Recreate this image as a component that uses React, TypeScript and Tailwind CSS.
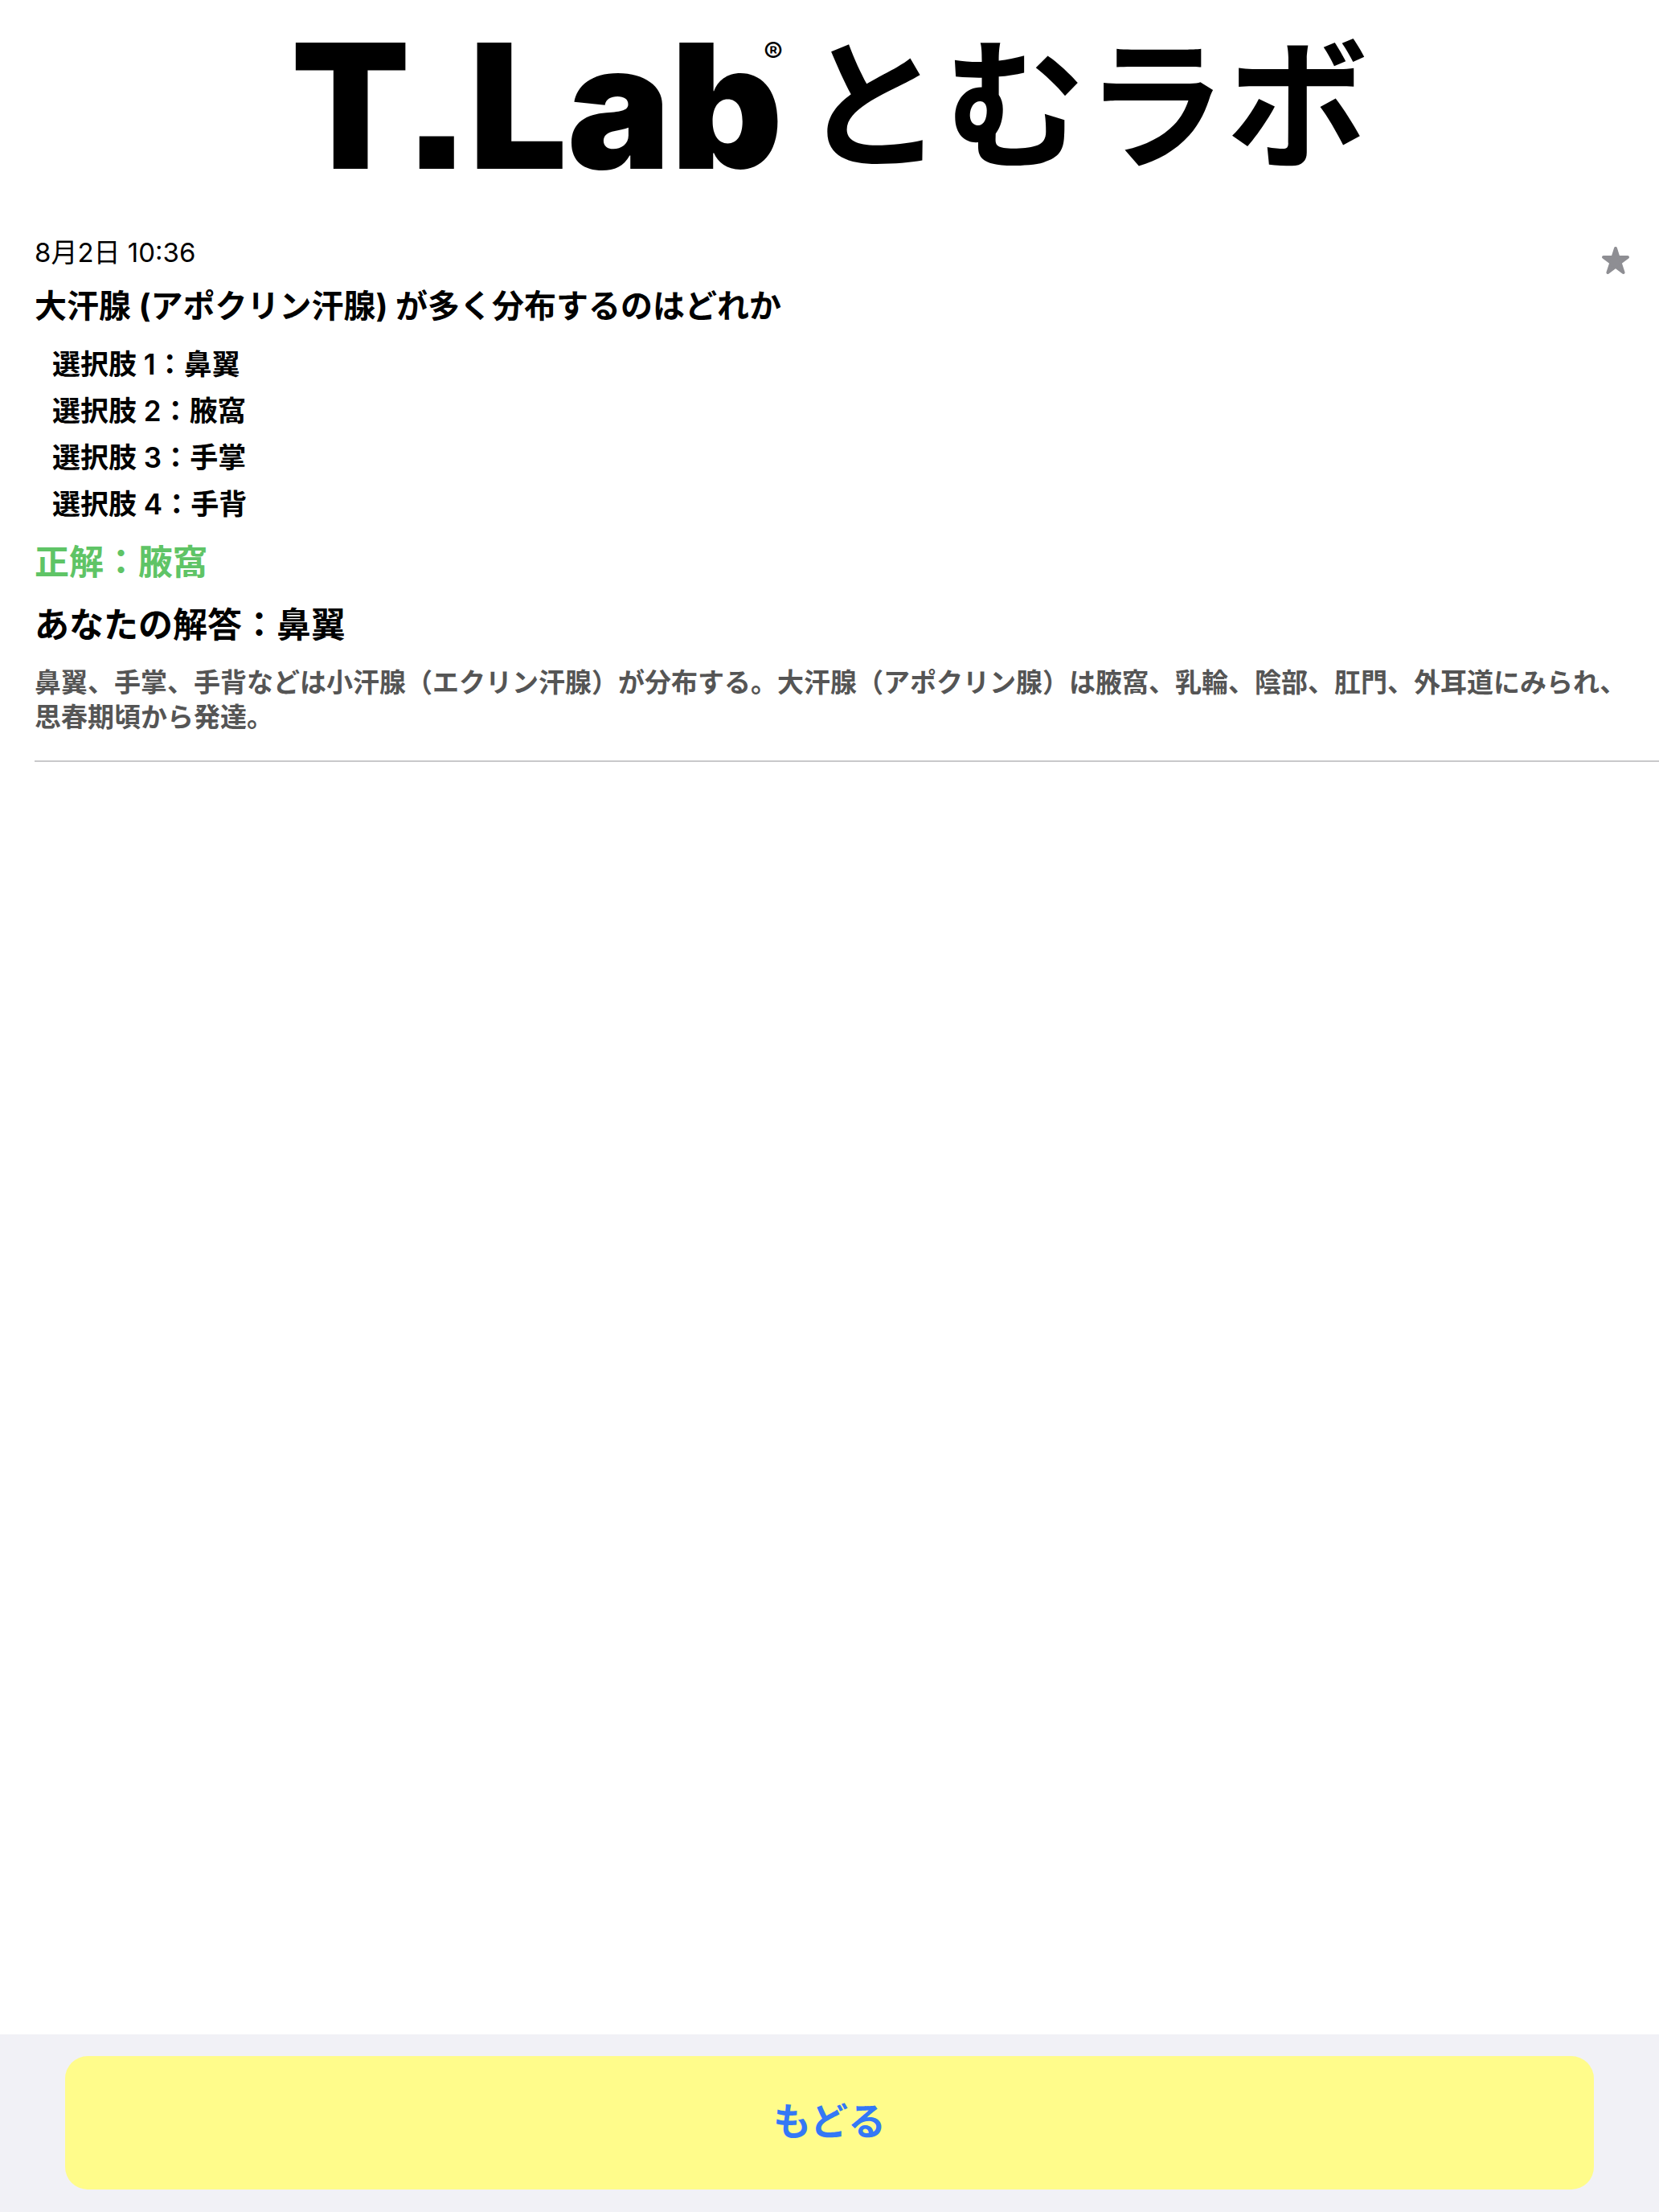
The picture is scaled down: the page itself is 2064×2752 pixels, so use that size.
const choices = ['鼻翼', '腋窩', '手掌', '手背'];

function StarIcon() {
  return (
    <svg viewBox="0 0 36 36" className="size-9" fill="#8e8e93" stroke="#8e8e93" strokeWidth="4" strokeLinejoin="round" aria-hidden="true">
      <path d="M18 3 L21.4 13.9 L33 14 L23.6 20.8 L27.6 33 L18 25.6 L8.4 33 L12.4 20.8 L3 14 L14.6 13.9 Z" />
    </svg>
  );
}

function Logo() {
  return (
    <header className="flex justify-center pt-5">
      <h1 className="flex items-center gap-6 text-black whitespace-nowrap leading-[224px]">
        <span className="relative text-[216px] font-black [font-feature-settings:'ss07']">
          T.Lab
          <span className="absolute top-0 right-0 text-[36px] leading-[90px] font-medium">®</span>
        </span>
        <span className="text-[176px] font-bold">とむラボ</span>
      </h1>
    </header>
  );
}

export default function App() {
  return (
    <div className="flex min-h-screen flex-col bg-white font-['Inter','Noto_Sans_CJK_JP',sans-serif] text-black">
      <Logo />

      <main className="flex-1">
        <article className="ml-[43px] border-b-2 border-[#c8c8ca] pt-[46px] pr-9 pb-8">
          <div className="flex items-start justify-between">
            <time className="text-[33px] leading-[48px]">8月2日 10:36</time>
            <button type="button" aria-label="お気に入り" className="mt-4">
              <StarIcon />
            </button>
          </div>

          <h2 className="text-[40px] leading-[78px] font-bold">大汗腺 (アポクリン汗腺) が多く分布するのはどれか</h2>

          <ol className="mt-1 pl-[22px]">
            {choices.map((choice, index) => (
              <li key={choice} className="text-[35px] leading-[58px] font-semibold">
                選択肢 {index + 1}：{choice}
              </li>
            ))}
          </ol>

          <p className="mt-1 text-[43px] leading-[78px] font-semibold text-[#5fc466]">正解：腋窩</p>
          <p className="text-[43px] leading-[78px] font-semibold">あなたの解答：鼻翼</p>
          <p className="mt-3 text-[33px] leading-[43px] font-semibold text-[#555555]">
            鼻翼、手掌、手背などは小汗腺（エクリン汗腺）が分布する。大汗腺（アポクリン腺）は腋窩、乳輪、陰部、肛門、外耳道にみられ、思春期頃から発達。
          </p>
        </article>
      </main>

      <footer className="bg-[#f1f1f6] px-[81px] pt-[27px] pb-7">
        <button type="button" className="h-[166px] w-full rounded-[28px] bg-[#fffc8b] pb-1 text-[47px] font-semibold text-[#3478f6]">
          もどる
        </button>
      </footer>
    </div>
  );
}
